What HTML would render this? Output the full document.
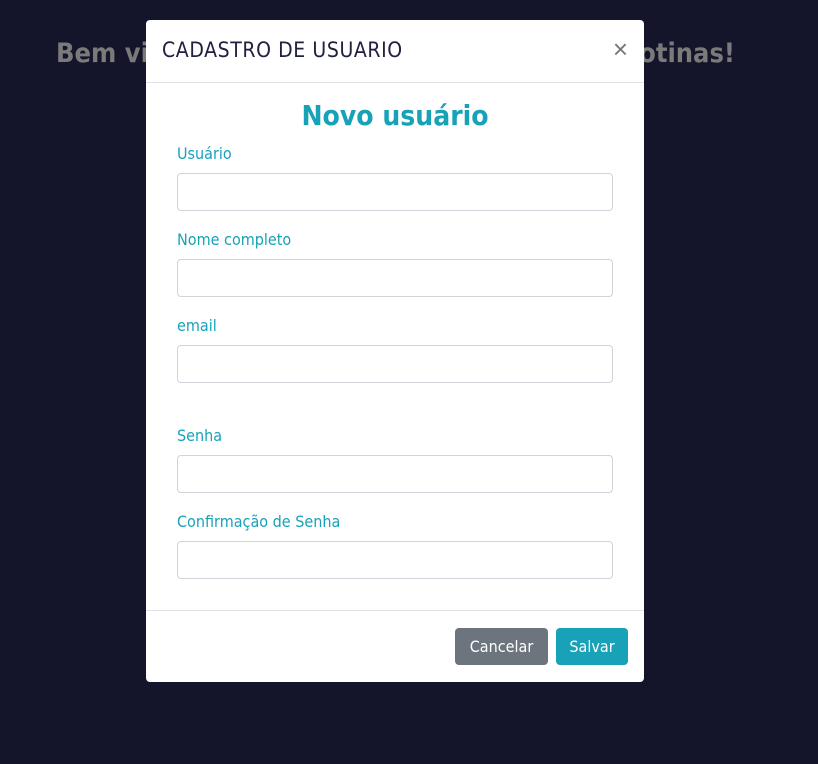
<!DOCTYPE html>
<html><head><style>
body{margin:0;width:818px;height:764px;background:#14142a;font-family:"DejaVu Sans Condensed","Liberation Sans",sans-serif;position:relative;overflow:hidden}
.bg{position:absolute;top:38px;font-size:27px;font-weight:bold;color:#7a7a7a;white-space:nowrap}
.modal{position:absolute;left:146px;top:20px;width:498px;height:662px;background:#fff;border-radius:4px}
.hd{height:62px;border-bottom:1px solid #dee2e6;position:relative}
.hd h5{margin:0;position:absolute;left:16px;top:18px;font-size:21px;letter-spacing:0.6px;font-weight:normal;color:#202040}
.x{position:absolute;right:16px;top:14px;font-size:26px;color:#777;font-family:"Liberation Sans",sans-serif}
h2{position:absolute;top:79px;left:0;width:498px;text-align:center;margin:0;font-size:28px;font-weight:bold;color:#17a2b8}
.l{position:absolute;left:31px;font-size:16px;color:#17a2b8}
.i{position:absolute;left:31px;width:434px;height:36px;border:1px solid #ced4da;border-radius:4px}
.ft{position:absolute;top:590px;left:0;width:498px;border-top:1px solid #dee2e6}
.b{position:absolute;top:608px;height:37px;border-radius:4px;color:#fff;font-size:16px;line-height:37px;text-align:center}
</style></head><body>
<div class="bg" style="left:56px">Bem vindo</div>
<div class="bg" style="right:83px">rotinas!</div>
<div class="modal">
<div class="hd"><h5>CADASTRO DE USUARIO</h5><span class="x">×</span></div>
<h2>Novo usuário</h2>
<div class="l" style="top:124px">Usuário</div><div class="i" style="top:153px"></div>
<div class="l" style="top:210px">Nome completo</div><div class="i" style="top:239px"></div>
<div class="l" style="top:296px">email</div><div class="i" style="top:325px"></div>
<div class="l" style="top:406px">Senha</div><div class="i" style="top:435px"></div>
<div class="l" style="top:492px">Confirmação de Senha</div><div class="i" style="top:521px"></div>
<div class="ft"></div>
<div class="b" style="left:309px;width:93px;background:#6c757d">Cancelar</div>
<div class="b" style="left:410px;width:72px;background:#17a2b8">Salvar</div>
</div>
</body></html>
